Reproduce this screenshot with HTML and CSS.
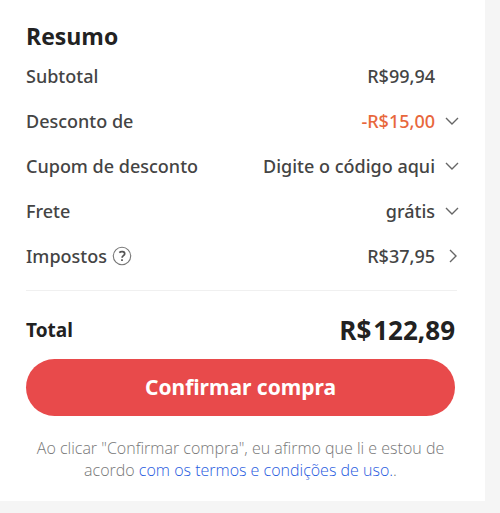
FILE: index.html
```html
<!DOCTYPE html>
<html lang="pt-BR">
<head>
<meta charset="utf-8">
<meta name="viewport" content="width=device-width, initial-scale=1">
<title>Resumo</title>
<link rel="stylesheet" href="styles.css">
</head>
<body>
<main class="summary">
  <h1 class="title">Resumo</h1>
  <dl class="lines">
    <div class="line"><dt>Subtotal</dt><dd><span>R$99,94</span></dd></div>
    <div class="line"><dt>Desconto de</dt><dd><button type="button" class="toggle discount">-R$15,00<svg class="chevron" viewBox="0 0 16 16" aria-hidden="true"><path d="M2 5l6 6 6-6"/></svg></button></dd></div>
    <div class="line"><dt>Cupom de desconto</dt><dd><button type="button" class="toggle">Digite o código aqui<svg class="chevron" viewBox="0 0 16 16" aria-hidden="true"><path d="M2 5l6 6 6-6"/></svg></button></dd></div>
    <div class="line"><dt>Frete</dt><dd><button type="button" class="toggle">grátis<svg class="chevron" viewBox="0 0 16 16" aria-hidden="true"><path d="M2 5l6 6 6-6"/></svg></button></dd></div>
    <div class="line"><dt>Impostos <button type="button" class="info" aria-label="Sobre os impostos"><svg class="help" viewBox="0 0 20 20" aria-hidden="true"><circle cx="10" cy="10" r="8.7"/><path class="mark" d="M7.3 6.6C8.7 5.2 12.7 5 12.7 7.7c0 2-2.6 2-2.6 4.1M10 13.3v1.8"/></svg></button></dt><dd><button type="button" class="toggle">R$37,95<svg class="chevron" viewBox="0 0 16 16" aria-hidden="true"><path d="M6 2l6 6-6 6"/></svg></button></dd></div>
  </dl>
  <div class="total"><span>Total</span><strong class="amount"><span>R$</span><span>122,89</span></strong></div>
  <button type="button" class="confirm">Confirmar compra</button>
  <p class="terms">Ao clicar "Confirmar compra", eu afirmo que li e estou de acordo <a href="#">com os termos e condições de uso.</a>.</p>
</main>
</body>
</html>
```
FILE: styles.css
```css
* {
  box-sizing: border-box;
}

body {
  margin: 0;
  background: #f5f5f5;
  color: #222;
  font-family: "Noto Sans", "Open Sans", sans-serif;
  font-size: 18px;
  line-height: 24px;
}

button {
  padding: 0;
  border: 0;
  background: none;
  color: inherit;
  font: inherit;
  cursor: pointer;
}

.summary {
  margin: 0 15px 12px 0;
  padding: 20px 30px 20px 26px;
  background: #fff;
}

.title {
  margin: 0 0 1px;
  font-family: "Open Sans", sans-serif;
  font-size: 23px;
  font-weight: 700;
  line-height: 32px;
}

.lines {
  margin: 0 -2px 0 0;
  padding: 0 2px 12px 0;
  border-bottom: 1px solid #f0f0f0;
  color: #444;
  font-weight: 500;
}

.line {
  display: flex;
  justify-content: space-between;
  align-items: center;
  height: 45px;
}

.line dt {
  display: flex;
  align-items: center;
  gap: 5px;
}

.line dd {
  margin: 0;
}

.line dd span {
  margin-right: 20px;
}

.toggle {
  display: flex;
  align-items: center;
  gap: 9px;
}

.discount {
  color: #e8673c;
}

.chevron {
  width: 16px;
  height: 16px;
  margin-right: -5px;
  fill: none;
  stroke: #666;
  stroke-width: 1.4;
}

.info {
  display: flex;
}

.help {
  width: 20px;
  height: 20px;
  fill: none;
  stroke: #777;
  stroke-width: 1.1;
}

.mark {
  stroke: #555;
  stroke-width: 1.7;
}

.total {
  display: flex;
  justify-content: space-between;
  align-items: center;
  padding: 19px 0 9px;
  font-size: 19px;
  font-weight: 700;
}

.amount {
  display: flex;
  gap: 2px;
  font-family: "Open Sans", sans-serif;
  font-size: 26px;
  font-weight: 700;
  line-height: 40px;
}

.confirm {
  display: block;
  width: 100%;
  padding: 16px;
  border-radius: 29px;
  background: #e84a4b;
  color: #fff;
  font-size: 21px;
  font-weight: 700;
  line-height: 25px;
}

.terms {
  margin: 21px 0 0;
  color: #777;
  font-family: "Open Sans", sans-serif;
  font-size: 16px;
  font-weight: 300;
  line-height: 22px;
  text-align: center;
}

.terms a {
  color: #1f5be0;
  text-decoration: none;
}
```
